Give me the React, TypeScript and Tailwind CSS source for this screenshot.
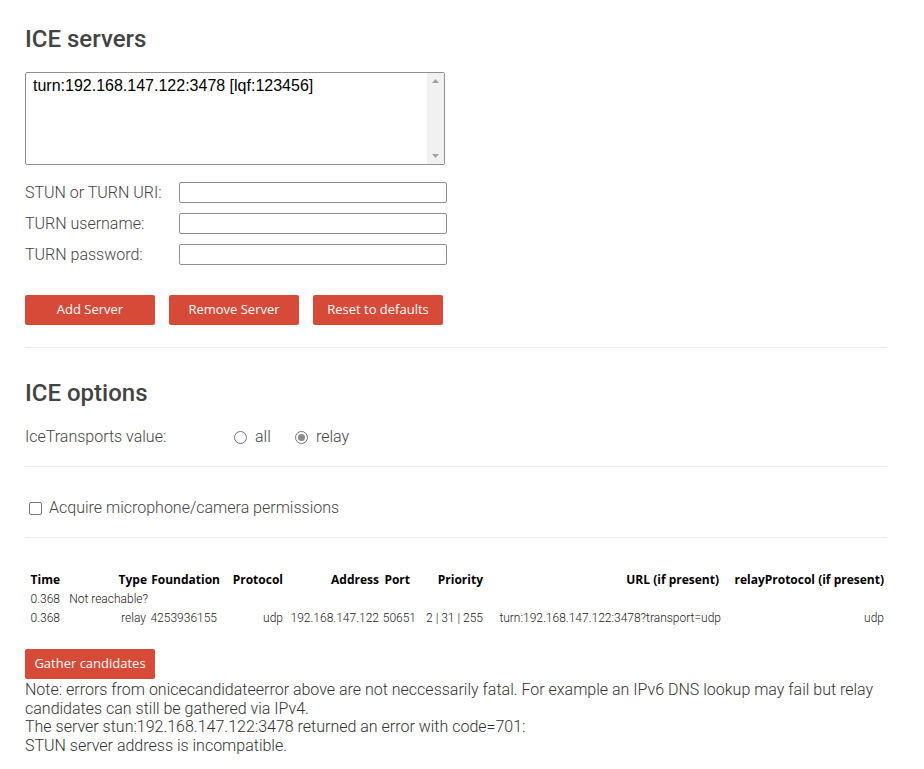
import React from "react";

const body = "font-['Roboto',sans-serif] font-light text-[16px] text-[#444]";
const btn =
  "h-[30px] w-[130px] rounded-[2px] bg-[#d84a38] text-white text-[13px] font-normal font-['Open_Sans',sans-serif] flex items-center justify-center";

function Radio({ checked }: { checked?: boolean }) {
  return (
    <span className="inline-flex h-[13px] w-[13px] items-center justify-center rounded-full border border-[#767676] bg-white">
      {checked && <span className="h-[7px] w-[7px] rounded-full bg-[#8c8c8c]" />}
    </span>
  );
}

const th = "font-['Open_Sans',sans-serif] font-bold text-[12px] text-black text-right p-0 whitespace-nowrap";
const td = "font-['Roboto',sans-serif] font-light text-[12px] text-[#222] text-right p-0 whitespace-nowrap";

export default function App() {
  return (
    <div className={`${body} w-[924px] min-h-[769px] bg-white`}>
      <div className="ml-[25px] w-[862px] pt-[25px]">
        <h2 className="font-['Roboto',sans-serif] font-medium text-[24px] leading-[29px] text-[#444]">ICE servers</h2>

        <div className="mt-[18px] flex h-[93px] w-[420px] rounded-[2px] border border-[#8f8f8f] bg-white">
          <div className="flex-1 pl-[7px] pt-[4px] font-['Liberation_Sans',Arial,sans-serif] font-normal text-[16px] leading-[18px] text-black">
            turn:192.168.147.122:3478 [lqf:123456]
          </div>
          <div className="flex w-[17px] flex-col items-center justify-between bg-[#f1f1f1] py-[6px]">
            <svg width="7" height="4" viewBox="0 0 7 4"><polygon points="3.5,0 7,4 0,4" fill="#a3a3a3" /></svg>
            <svg width="7" height="4" viewBox="0 0 7 4"><polygon points="0,0 7,0 3.5,4" fill="#a3a3a3" /></svg>
          </div>
        </div>

        <div className="mt-[17px] flex flex-col gap-[10px]">
          {["STUN or TURN URI:", "TURN username:", "TURN password:"].map((l) => (
            <div key={l} className="flex h-[21px] items-center">
              <span className="w-[154px] leading-[19px]">{l}</span>
              <span className="h-[21px] w-[268px] rounded-[2px] border border-[#8f8f8f] bg-white" />
            </div>
          ))}
        </div>

        <div className="mt-[30px] flex gap-[14px]">
          <div className={btn}>Add Server</div>
          <div className={btn}>Remove Server</div>
          <div className={btn}>Reset to defaults</div>
        </div>

        <div className="mt-[22px] h-px bg-[#eee]" />

        <h2 className="mt-[31px] font-['Roboto',sans-serif] font-medium text-[24px] leading-[29px] text-[#444]">ICE options</h2>

        <div className="mt-[19px] flex h-[20px] items-center">
          <span className="w-[209px]">IceTransports value:</span>
          <Radio />
          <span className="ml-[8px] w-[40px]">all</span>
          <Radio checked />
          <span className="ml-[8px]">relay</span>
        </div>

        <div className="mt-[19px] h-px bg-[#eee]" />

        <div className="mt-[31px] flex h-[20px] items-center pl-[4px]">
          <span className="h-[13px] w-[13px] rounded-[2px] border border-[#767676] bg-white" />
          <span className="ml-[7px]">Acquire microphone/camera permissions</span>
        </div>

        <div className="mt-[19px] h-px bg-[#eee]" />

        <table className="mt-[32px] ml-[5px] table-fixed border-collapse">
          <colgroup>
            <col className="w-[30px]" />
            <col className="w-[88px]" />
            <col className="w-[72px]" />
            <col className="w-[63px]" />
            <col className="w-[96px]" />
            <col className="w-[37px]" />
            <col className="w-[67px]" />
            <col className="w-[238px]" />
            <col className="w-[163px]" />
          </colgroup>
          <thead>
            <tr className="h-[19px]">
              <th className={th}>Time</th>
              <th className={`${th} pr-[1px]`}>Type</th>
              <th className={th}>Foundation</th>
              <th className={th}>Protocol</th>
              <th className={th}>Address</th>
              <th className={`${th} pr-[6px]`}>Port</th>
              <th className={th}>Priority</th>
              <th className={`${th} pr-[2px]`}>URL (if present)</th>
              <th className={th}>relayProtocol (if present)</th>
            </tr>
          </thead>
          <tbody>
            <tr className="h-[19px]">
              <td className={td}>0.368</td>
              <td className={`${td} text-left pl-[8px]`}>Not reachable?</td>
              <td className={td}></td>
              <td className={td}></td>
              <td className={td}></td>
              <td className={td}></td>
              <td className={td}></td>
              <td className={td}></td>
              <td className={td}></td>
            </tr>
            <tr className="h-[20px]">
              <td className={td}>0.368</td>
              <td className={`${td} pr-[2px]`}>relay</td>
              <td className={`${td} pr-[3px]`}>4253936155</td>
              <td className={td}>udp</td>
              <td className={td}>192.168.147.122</td>
              <td className={td}>50651</td>
              <td className={td}>2 | 31 | 255</td>
              <td className={td}>turn:192.168.147.122:3478?transport=udp</td>
              <td className={td}>udp</td>
            </tr>
          </tbody>
        </table>

        <div className="mt-[21px]">
          <div className={btn}>Gather candidates</div>
        </div>

        <div className="mt-[2px] leading-[18.7px] text-[#333]">
          <p>
            Note: errors from onicecandidateerror above are not neccessarily fatal. For example an IPv6 DNS lookup may fail but relay candidates can still be gathered via IPv4.
          </p>
          <p>The server stun:192.168.147.122:3478 returned an error with code=701:</p>
          <p>STUN server address is incompatible.</p>
        </div>
      </div>
    </div>
  );
}
